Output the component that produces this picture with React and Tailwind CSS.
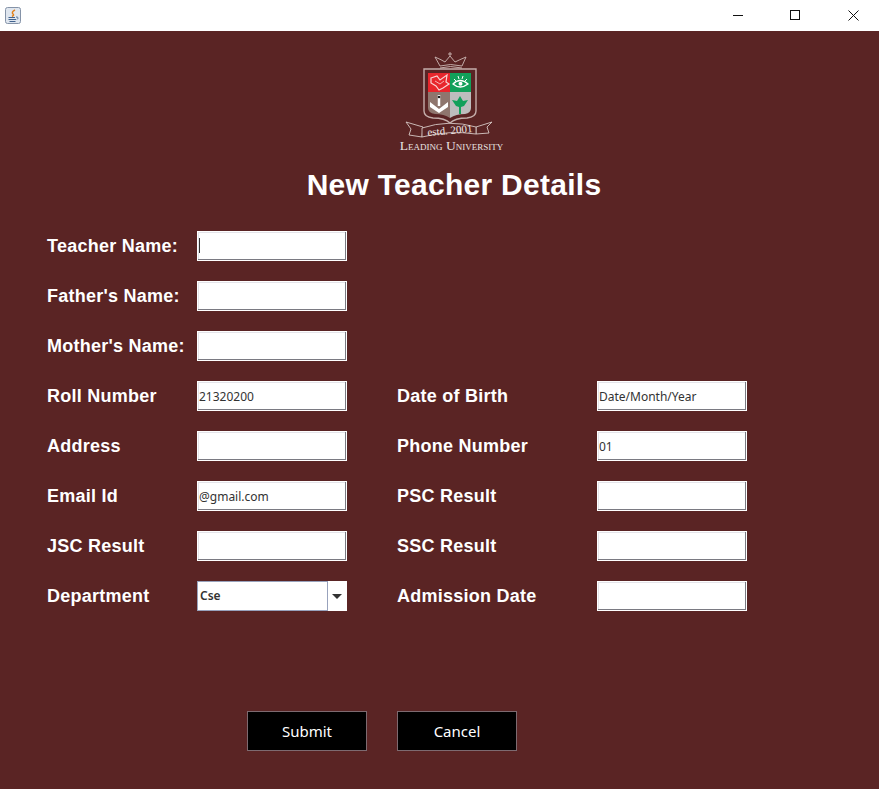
import React from 'react';

const Field = ({ value = '', caret = false }) => (
  <div className="relative h-[30px] w-[150px]">
    <input
      readOnly
      value={value}
      className="h-full w-full border border-white bg-white pl-[1px] font-['Noto_Sans',sans-serif] text-[12px] text-[#333333] shadow-[inset_-1px_-1px_0_#7a7a82,inset_1px_1px_0_#e4e4ea] outline-none"
    />
    {caret && <div className="absolute left-[2px] top-[7px] h-[15px] w-[1px] bg-[#333333]" />}
  </div>
);

const Label = ({ children }) => (
  <div className="flex h-[30px] items-center whitespace-nowrap font-['Liberation_Sans',sans-serif] text-[18px] font-bold tracking-[0.25px] text-white">
    {children}
  </div>
);

const Logo = () => (
  <svg width="110" height="105" viewBox="400 50 110 105">
    {/* crown */}
    <g fill="none" stroke="#cdb9b6" strokeWidth="0.9">
      <path d="M436 57 Q443 60 446 62 L451 56 L456 62 Q460 60 467 57 L463 66 Q451 63 441 66 Z" />
      <path d="M441 68 Q451 65 463 68" />
      <path d="M451 52 V56 M449 54 H453" />
    </g>
    {/* shield */}
    <path d="M425 69 H477 V111 Q477 117 468 118 Q456 118 451 123 Q446 118 434 118 Q425 117 425 111 Z" fill="#5a2424" stroke="#c4adaa" strokeWidth="1.400" />
    <path d="M429 73 H451 V92 H429 Z" fill="#e8262c" />
    <path d="M451 73 H472 V92 H451 Z" fill="#12a05a" />
    <path d="M429 92 H451 V118 Q445 114 436 114 Q429 113 429 108 Z" fill="#8f766e" />
    <path d="M451 92 H472 V108 Q472 113 466 114 Q457 114 451 118 Z" fill="#bdbdbd" />
    {/* dove */}
    <path d="M432 78 L438 76 L441 80 L448 75 L447 82 L450 84 L444 88 L440 90 L437 86 L432 83 Z" fill="none" stroke="#f9d5d5" strokeWidth="1.200" />
    <path d="M436 81 L441 84 L445 81" fill="none" stroke="#f9d5d5" strokeWidth="0.800" />
    {/* open eye */}
    <path d="M454 84 Q461 77 469 84 Q461 90 454 84 Z" fill="none" stroke="#ffffff" strokeWidth="1.300" />
    <circle cx="461.500" cy="83.800" r="2" fill="#ffffff" />
    <path d="M455 79 L457 81 M459 76 L460 79 M464 76 L463 79 M468 79 L466 81" stroke="#ffffff" strokeWidth="1" />
    {/* book and pen */}
    <path d="M431 102 L440 109 L449 102 L449 107 L440 113 L431 107 Z" fill="#ffffff" />
    <path d="M440 95 V106" stroke="#ffffff" strokeWidth="2.500" />
    <circle cx="440" cy="97" r="1.300" fill="#222222" />
    {/* leaf */}
    <path d="M461 96 L464 101 L469 100 L465 106 L462 107 V114 H460 V107 L457 106 L453 100 L458 101 Z" fill="#12a05a" />
    {/* banner */}
    <g fill="#5a2424" stroke="#d6c8c5" strokeWidth="0.900">
      <path d="M407 122 L424 127 L423 137 L410 135 L412 129 Z" />
      <path d="M493 122 L477 127 L477 134 L490 133 L488 127 Z" />
      <path d="M423 128 Q450 119 477 127 L477 134 Q450 130 423 137 Z" />
    </g>
    <text x="451" y="134" textAnchor="middle" fill="#f0e8e6" transform="rotate(-5 451 131)" className="font-['Liberation_Serif',serif] text-[11px]">estd. 2001</text>
    <text x="452.500" y="150" textAnchor="middle" fill="#e9e3e1" className="font-['Liberation_Serif',serif] text-[13.500px] [font-variant-caps:small-caps]">Leading University</text>
  </svg>
);

const App = () => {
  return (
    <div className="min-h-[789px] w-full bg-[#5a2424]">
      <div className="flex h-[31px] items-center justify-between bg-white">
        <svg className="ml-[5px]" width="16" height="17" viewBox="0 0 16 17">
          <rect x="0.500" y="0.500" width="15" height="16" rx="2" fill="#dfe6ef" stroke="#8593a8" />
          <path d="M10 3 Q6 5 8 7 Q9.500 8 7 9.500" fill="none" stroke="#e0801c" strokeWidth="1.500" />
          <path d="M3.500 10.500 H10 M3.500 12.500 H11 M4.500 14.500 H10.500" stroke="#41638f" strokeWidth="1" />
          <path d="M11 10 Q14.500 10 12 12.500" fill="none" stroke="#41638f" strokeWidth="0.900" />
        </svg>
        <div className="flex items-center">
          <svg width="10" height="11" viewBox="0 0 10 11" className="mr-[47px]">
            <path d="M0 5.500 H10" stroke="#111111" strokeWidth="1" />
          </svg>
          <svg width="10" height="11" viewBox="0 0 10 11" className="mr-[48px]">
            <rect x="0.500" y="0.500" width="9" height="9" fill="none" stroke="#111111" />
          </svg>
          <svg width="11" height="11" viewBox="0 0 11 11" className="mr-[20px]">
            <path d="M0.500 0.500 L10.500 10.500 M10.500 0.500 L0.500 10.500" stroke="#111111" strokeWidth="1" />
          </svg>
        </div>
      </div>

      <div className="flex flex-col items-center pl-[29px] pt-[19px]">
        <Logo />
        <h1 className="mt-[12px] font-['Liberation_Sans',sans-serif] text-[30px] font-bold leading-[36px] tracking-[0.27px] text-white">New Teacher Details</h1>
      </div>

      <div className="ml-[47px] mt-[28px] grid grid-cols-[150px_150px_250px_150px] gap-y-[20px]">
        <Label>Teacher Name:</Label>
        <Field caret />
        <div className="col-span-2" />
        <Label>Father's Name:</Label>
        <Field />
        <div className="col-span-2" />
        <Label>Mother's Name:</Label>
        <Field />
        <div className="col-span-2" />
        <Label>Roll Number</Label>
        <Field value="21320200" />
        <div className="pl-[50px]"><Label>Date of Birth</Label></div>
        <Field value="Date/Month/Year" />
        <Label>Address</Label>
        <Field />
        <div className="pl-[50px]"><Label>Phone Number</Label></div>
        <Field value="01" />
        <Label>Email Id</Label>
        <Field value="@gmail.com" />
        <div className="pl-[50px]"><Label>PSC Result</Label></div>
        <Field />
        <Label>JSC Result</Label>
        <Field />
        <div className="pl-[50px]"><Label>SSC Result</Label></div>
        <Field />
        <Label>Department</Label>
        <div className="flex h-[30px] w-[150px] bg-white">
          <div className="flex h-full w-[131px] items-center border border-[#98a2bc] pl-[2px] font-['Noto_Sans',sans-serif] text-[12px] font-semibold text-[#333333]">Cse</div>
          <div className="flex flex-1 items-center justify-center pr-[1px]">
            <svg width="10" height="5" viewBox="0 0 10 5"><path d="M0 0 H10 L5 5 Z" fill="#333333" /></svg>
          </div>
        </div>
        <div className="pl-[50px]"><Label>Admission Date</Label></div>
        <Field />
      </div>

      <div className="ml-[247px] mt-[100px] flex gap-[30px]">
        <button className="h-[40px] w-[120px] border border-[#7d6a70] bg-black font-['Noto_Sans',sans-serif] text-[15px] text-white">Submit</button>
        <button className="h-[40px] w-[120px] border border-[#7d6a70] bg-black font-['Noto_Sans',sans-serif] text-[15px] text-white">Cancel</button>
      </div>
    </div>
  );
};

export default App;
